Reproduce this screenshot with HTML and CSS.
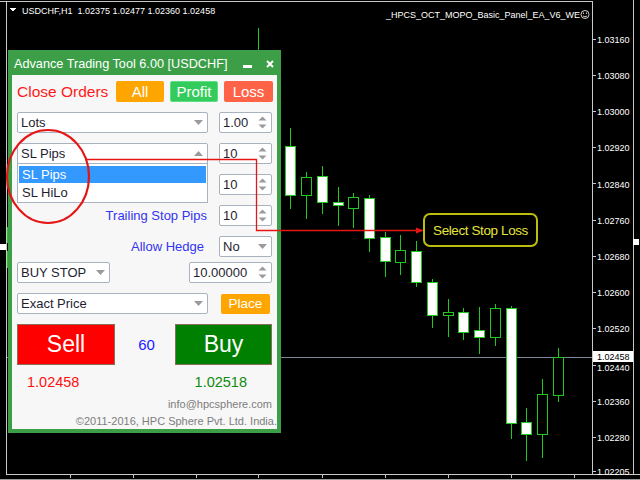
FILE: index.html
```html
<!DOCTYPE html>
<html>
<head>
<meta charset="utf-8">
<title>Advance Trading Tool</title>
<link rel="stylesheet" href="styles.css">
</head>
<body>
<svg class="chart" width="640" height="480" viewBox="0 0 640 480" shape-rendering="crispEdges">
  <g class="frame" stroke="#c8c8c8" fill="none">
    <line x1="0" y1="1.5" x2="593" y2="1.5"/>
    <line x1="6.5" y1="2" x2="6.5" y2="475"/>
    <line x1="592.5" y1="1" x2="592.5" y2="475"/>
    <line x1="633.5" y1="0" x2="633.5" y2="475"/>
    <line x1="6" y1="474.5" x2="640" y2="474.5"/>
    <line x1="0" y1="479.5" x2="640" y2="479.5" stroke="#9a9a9a"/>
  </g>
  <g stroke="#c8c8c8">
    <line x1="70.5" y1="475" x2="70.5" y2="478"/>
    <line x1="133.5" y1="475" x2="133.5" y2="478"/>
    <line x1="196.5" y1="475" x2="196.5" y2="478"/>
    <line x1="258.5" y1="475" x2="258.5" y2="478"/>
    <line x1="322.5" y1="475" x2="322.5" y2="478"/>
    <line x1="385.5" y1="475" x2="385.5" y2="478"/>
    <line x1="448.5" y1="475" x2="448.5" y2="478"/>
    <line x1="511.5" y1="475" x2="511.5" y2="478"/>
    <line x1="574.5" y1="475" x2="574.5" y2="478"/>
  </g>
  <line x1="7" y1="357.5" x2="592" y2="357.5" stroke="#7a8694"/>
  <rect x="0" y="244" width="6" height="6" fill="#fff"/>
  <rect x="633" y="239" width="6" height="6" fill="#fff"/>
  <g stroke="#1ec81e">
    <line x1="7.5" y1="227" x2="7.5" y2="243"/>
    <line x1="7.5" y1="251" x2="7.5" y2="268"/>
    <line x1="258.5" y1="28" x2="258.5" y2="52"/>
  </g>
  <g class="candles" stroke="#1ec81e" stroke-width="1">
    <line x1="290.5" y1="128" x2="290.5" y2="209"/><rect x="285.5" y="146.5" width="10" height="49" fill="#fff"/>
    <line x1="306.5" y1="172" x2="306.5" y2="219"/><rect x="301.5" y="177.5" width="10" height="18" fill="#000"/>
    <line x1="322.5" y1="166" x2="322.5" y2="214"/><rect x="317.5" y="176.5" width="10" height="26" fill="#fff"/>
    <line x1="338.5" y1="187" x2="338.5" y2="226"/><rect x="333.5" y="202.5" width="10" height="3" fill="#fff"/>
    <line x1="353.5" y1="193" x2="353.5" y2="228"/><rect x="348.5" y="197.5" width="10" height="11" fill="#000"/>
    <line x1="369.5" y1="195" x2="369.5" y2="252"/><rect x="364.5" y="198.5" width="10" height="40" fill="#fff"/>
    <line x1="385.5" y1="232" x2="385.5" y2="277"/><rect x="380.5" y="237.5" width="10" height="24" fill="#fff"/>
    <line x1="400.5" y1="235" x2="400.5" y2="275"/><rect x="395.5" y="250.5" width="10" height="12" fill="#000"/>
    <line x1="416.5" y1="241" x2="416.5" y2="287"/><rect x="411.5" y="251.5" width="10" height="31" fill="#fff"/>
    <line x1="432.5" y1="279" x2="432.5" y2="328"/><rect x="427.5" y="282.5" width="10" height="33" fill="#fff"/>
    <line x1="448.5" y1="299" x2="448.5" y2="337"/><rect x="443.5" y="312.5" width="10" height="3" fill="#000"/>
    <line x1="463.5" y1="308" x2="463.5" y2="340"/><rect x="458.5" y="312.5" width="10" height="20" fill="#fff"/>
    <line x1="479.5" y1="307" x2="479.5" y2="354"/><rect x="474.5" y="330.5" width="10" height="7" fill="#fff"/>
    <line x1="495.5" y1="304" x2="495.5" y2="346"/><rect x="490.5" y="308.5" width="10" height="29" fill="#000"/>
    <line x1="511.5" y1="306" x2="511.5" y2="439"/><rect x="506.5" y="308.5" width="10" height="115" fill="#fff"/>
    <line x1="526.5" y1="408" x2="526.5" y2="461"/><rect x="521.5" y="422.5" width="10" height="12" fill="#fff"/>
    <line x1="542.5" y1="379" x2="542.5" y2="458"/><rect x="537.5" y="394.5" width="10" height="40" fill="#000"/>
    <line x1="558.5" y1="348" x2="558.5" y2="402"/><rect x="553.5" y="357.5" width="10" height="38" fill="#000"/>
  </g>
  <g stroke="#c8c8c8">
    <line x1="593" y1="39.5" x2="596" y2="39.5"/>
    <line x1="593" y1="75.5" x2="596" y2="75.5"/>
    <line x1="593" y1="111.5" x2="596" y2="111.5"/>
    <line x1="593" y1="147.5" x2="596" y2="147.5"/>
    <line x1="593" y1="183.5" x2="596" y2="183.5"/>
    <line x1="593" y1="220.5" x2="596" y2="220.5"/>
    <line x1="593" y1="256.5" x2="596" y2="256.5"/>
    <line x1="593" y1="292.5" x2="596" y2="292.5"/>
    <line x1="593" y1="328.5" x2="596" y2="328.5"/>
    <line x1="593" y1="365.5" x2="596" y2="365.5"/>
    <line x1="593" y1="401.5" x2="596" y2="401.5"/>
    <line x1="593" y1="437.5" x2="596" y2="437.5"/>
    <line x1="593" y1="471.5" x2="596" y2="471.5"/>
  </g>
  <g class="axis-text">
    <text x="597" y="43">1.03160</text>
    <text x="597" y="79">1.03080</text>
    <text x="597" y="115">1.03000</text>
    <text x="597" y="151">1.02920</text>
    <text x="597" y="188">1.02840</text>
    <text x="597" y="224">1.02760</text>
    <text x="597" y="260">1.02680</text>
    <text x="597" y="296">1.02600</text>
    <text x="597" y="332">1.02520</text>
    <text x="597" y="371">1.02440</text>
    <text x="597" y="405">1.02360</text>
    <text x="597" y="441">1.02280</text>
    <text x="597" y="475">1.02205</text>
  </g>
  <rect x="593" y="351" width="40" height="11" fill="#fff"/>
  <text class="axis-text bidlabel" x="597" y="360">1.02458</text>
  <polygon points="10,8 16,8 13,12" fill="#fff"/>
  <text class="axis-text" x="22" y="14">USDCHF,H1  1.02375 1.02477 1.02360 1.02458</text>
  <text class="axis-text" x="580" y="18" text-anchor="end">_HPCS_OCT_MOPO_Basic_Panel_EA_V6_WE</text>
  <g fill="none" stroke="#fff" stroke-width="0.8" shape-rendering="auto">
    <circle cx="585" cy="14.5" r="4"/>
    <path d="M583 16 q2 1.6 4 0"/>
  </g>
  <circle cx="583.5" cy="13.2" r="0.6" fill="#fff" shape-rendering="auto"/>
  <circle cx="586.5" cy="13.2" r="0.6" fill="#fff" shape-rendering="auto"/>
</svg>

<div class="panel">
  <div class="titlebar">
    <span class="title">Advance Trading Tool 6.00 [USDCHF]</span>
    <span class="winbtns">
      <span class="minbar"></span>
      <svg class="closex" width="8" height="8" viewBox="0 0 8 8"><path d="M1 1 L7 7 M7 1 L1 7" stroke="#fff" stroke-width="2"/></svg>
    </span>
  </div>
  <div class="pbody">
    <div class="row">
      <span class="close-label">Close Orders</span>
      <div class="btns">
        <span class="btn btn-all">All</span>
        <span class="btn btn-profit">Profit</span>
        <span class="btn btn-loss">Loss</span>
      </div>
    </div>
    <div class="row">
      <div class="combo wide"><span>Lots</span><svg class="dd" width="9" height="5" viewBox="0 0 9 5"><path d="M0 0 H9 L4.5 5 Z" fill="#9a9a9a"/></svg></div>
      <div class="spin"><span>1.00</span><svg class="sp" width="9" height="13" viewBox="0 0 9 13"><path d="M0.5 4.5 L4.5 0.5 L8.5 4.5 Z M0.5 8.5 L4.5 12.5 L8.5 8.5 Z" fill="#9a9a9a"/></svg></div>
    </div>
    <div class="row">
      <div class="combo wide"><span>SL Pips</span><svg class="dd" width="9" height="5" viewBox="0 0 9 5"><path d="M0 5 H9 L4.5 0 Z" fill="#9a9a9a"/></svg></div>
      <div class="spin"><span>10</span><svg class="sp" width="9" height="13" viewBox="0 0 9 13"><path d="M0.5 4.5 L4.5 0.5 L8.5 4.5 Z M0.5 8.5 L4.5 12.5 L8.5 8.5 Z" fill="#9a9a9a"/></svg></div>
    </div>
    <div class="row">
      <div class="wide"></div>
      <div class="spin"><span>10</span><svg class="sp" width="9" height="13" viewBox="0 0 9 13"><path d="M0.5 4.5 L4.5 0.5 L8.5 4.5 Z M0.5 8.5 L4.5 12.5 L8.5 8.5 Z" fill="#9a9a9a"/></svg></div>
    </div>
    <div class="row">
      <div class="label wide">Trailing Stop Pips</div>
      <div class="spin"><span>10</span><svg class="sp" width="9" height="13" viewBox="0 0 9 13"><path d="M0.5 4.5 L4.5 0.5 L8.5 4.5 Z M0.5 8.5 L4.5 12.5 L8.5 8.5 Z" fill="#9a9a9a"/></svg></div>
    </div>
    <div class="row tight">
      <div class="label wide hedge">Allow Hedge</div>
      <div class="combo small"><span>No</span><svg class="dd" width="9" height="5" viewBox="0 0 9 5"><path d="M0 0 H9 L4.5 5 Z" fill="#9a9a9a"/></svg></div>
    </div>
    <div class="row">
      <div class="combo mid"><span>BUY STOP</span><svg class="dd" width="9" height="5" viewBox="0 0 9 5"><path d="M0 0 H9 L4.5 5 Z" fill="#9a9a9a"/></svg></div>
      <div class="spin long"><span>10.00000</span><svg class="sp" width="9" height="13" viewBox="0 0 9 13"><path d="M0.5 4.5 L4.5 0.5 L8.5 4.5 Z M0.5 8.5 L4.5 12.5 L8.5 8.5 Z" fill="#9a9a9a"/></svg></div>
    </div>
    <div class="row">
      <div class="combo wide"><span>Exact Price</span><svg class="dd" width="9" height="5" viewBox="0 0 9 5"><path d="M0 0 H9 L4.5 5 Z" fill="#9a9a9a"/></svg></div>
      <span class="btn btn-place">Place</span>
    </div>
    <div class="row trade">
      <span class="big sell">Sell</span>
      <span class="spread">60</span>
      <span class="big buy">Buy</span>
    </div>
    <div class="prices"><span class="bid">1.02458</span><span class="ask">1.02518</span></div>
    <div class="info">info@hpcsphere.com</div>
    <div class="copy">©2011-2016, HPC Sphere Pvt. Ltd. India.</div>

    <div class="dropdown">
      <div class="opt sel">SL Pips</div>
      <div class="opt">SL HiLo</div>
    </div>
  </div>
</div>

<svg class="annot" width="640" height="480" viewBox="0 0 640 480">
  <ellipse cx="48" cy="176.5" rx="41" ry="46.5" fill="none" stroke="#e51515" stroke-width="2.2"/>
  <polyline points="85,159.5 256.5,159.5 256.5,230.5 418,230.5" fill="none" stroke="#e51515" stroke-width="1.3"/>
  <polygon points="416,227.5 424,230.5 416,233.5" fill="#e51515"/>
</svg>

<div class="callout">Select Stop Loss</div>
</body>
</html>
```

FILE: styles.css
```css
* { box-sizing: border-box; }

html, body {
  margin: 0;
  padding: 0;
}

body {
  width: 640px;
  height: 480px;
  background: #000;
  position: relative;
  overflow: hidden;
  font-family: "Liberation Sans", Arial, sans-serif;
}

.chart {
  position: absolute;
  left: 0;
  top: 0;
}

.axis-text {
  font-family: "Liberation Sans", Arial, sans-serif;
  font-size: 9px;
  fill: #fff;
  white-space: pre;
}

.chart .bidlabel {
  fill: #000;
}

/* ---------- panel window ---------- */
.panel {
  position: absolute;
  left: 8px;
  top: 50px;
  width: 273px;
  height: 383px;
  background: #3c9f48;
  padding: 0 4px 4px;
  display: flex;
  flex-direction: column;
}

.titlebar {
  height: 25px;
  display: flex;
  align-items: center;
  padding: 3px 2px 0 2px;
  color: #fff;
  font-size: 12.7px;
}

.winbtns {
  margin-left: auto;
  display: flex;
  align-items: center;
  gap: 14px;
  padding-right: 1px;
}

.minbar {
  display: block;
  width: 9px;
  height: 3px;
  background: #fff;
  margin-top: 5px;
}

.closex {
  display: block;
}

.pbody {
  flex: 1;
  position: relative;
  background: #f7f7f7;
  padding: 6px 5px 0;
  display: flex;
  flex-direction: column;
}

.row {
  display: flex;
  align-items: center;
  justify-content: space-between;
  height: 21px;
  margin-bottom: 10px;
  flex-shrink: 0;
}

.row.tight {
  margin-bottom: 5px;
}

.close-label {
  color: #ff1a1a;
  font-size: 15.5px;
}

.btns {
  display: flex;
  gap: 6px;
  margin-right: -1px;
}

.btn {
  display: flex;
  align-items: center;
  justify-content: center;
  height: 21px;
  width: 48px;
  color: #fff;
  font-size: 15px;
  border-radius: 2px;
}

.btn-all { background: #ffa500; }
.btn-profit { background: #33cc5c; border: 1px solid #5ede82; }
.btn-loss { background: #ff6347; width: 49px; }

.btn-place {
  background: #ffa500;
  width: 49px;
  height: 20px;
  font-size: 13.5px;
  margin-right: 2px;
}

.wide { width: 191px; height: 21px; }
.mid { width: 93px; }
.small { width: 53px; }

.combo, .spin {
  height: 21px;
  display: flex;
  align-items: center;
  justify-content: space-between;
  background: #fff;
  border: 1px solid #a9b2bf;
  border-radius: 2px;
  padding: 0 4px 0 3px;
  font-size: 13px;
  color: #1e1e30;
}

.spin {
  width: 53px;
  padding-right: 4px;
}

.spin.long {
  width: 83px;
}

.dd, .sp {
  display: block;
  flex-shrink: 0;
}

.label {
  display: flex;
  align-items: center;
  justify-content: flex-end;
  color: #3434f0;
  font-size: 13px;
  padding-right: 1px;
}

.label.hedge {
  padding-right: 4px;
}

.trade {
  height: 41px;
  margin-bottom: 0;
}

.big {
  display: flex;
  align-items: center;
  justify-content: center;
  height: 41px;
  color: #fff;
  font-size: 23px;
  border: 1px solid #8a6e5a;
}

.sell {
  width: 98px;
  background: #ff0000;
}

.buy {
  width: 97px;
  background: #008000;
}

.spread {
  color: #1a1aff;
  font-size: 15px;
  margin-left: 3px;
}

.prices {
  display: flex;
  margin-top: 8px;
  height: 18px;
  line-height: 18px;
  font-size: 14.5px;
}

.bid {
  color: #ff1010;
  margin-left: 10px;
}

.ask {
  color: #108a10;
  margin-left: auto;
  margin-right: 25px;
}

.info {
  margin-top: 6px;
  height: 14px;
  line-height: 14px;
  text-align: right;
  font-size: 11px;
  color: #7d7d7d;
}

.copy {
  margin-top: 3px;
  height: 14px;
  line-height: 14px;
  text-align: right;
  font-size: 11px;
  color: #7d7d7d;
  margin-right: -5px;
  white-space: nowrap;
}

/* open dropdown list */
.dropdown {
  position: absolute;
  left: 5px;
  top: 88px;
  width: 191px;
  height: 40px;
  background: #fff;
  border: 1px solid #a9b2bf;
  padding: 2px 1px 0;
  font-size: 13px;
  color: #1e1e30;
}

.opt {
  height: 18px;
  line-height: 18px;
  padding-left: 3px;
}

.opt.sel {
  background: #3399ff;
  color: #fff;
  height: 17px;
  line-height: 17px;
  margin-bottom: 1px;
}

/* annotation overlay */
.annot {
  position: absolute;
  left: 0;
  top: 0;
  pointer-events: none;
}

.callout {
  position: absolute;
  left: 423px;
  top: 213px;
  width: 115px;
  height: 34px;
  border: 2px solid #bdbd10;
  border-radius: 7px;
  background: #000;
  color: #e6e63a;
  font-size: 13.5px;
  letter-spacing: -0.4px;
  display: flex;
  align-items: center;
  justify-content: center;
}
```
